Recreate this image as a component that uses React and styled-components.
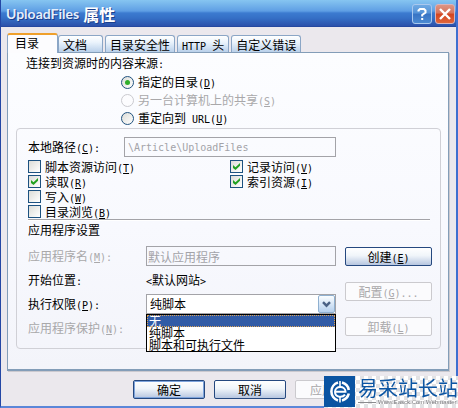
import React, { useState } from 'react';
import styled, { createGlobalStyle, css } from 'styled-components';

const GlobalStyle = createGlobalStyle`
  * {
    box-sizing: border-box;
  }
  body {
    margin: 0;
    background: #ebe8ed;
    color: #000;
    font-family: 'Noto Sans CJK SC', sans-serif;
    font-size: 12px;
    line-height: 14px;
  }
  button, input, select {
    margin: 0;
    font: inherit;
    color: inherit;
  }
`;

// Window frame
const Dialog = styled.main`
  background: #ebe8ed;
  border-left: 1px solid #2447a5;
  border-right: 2px solid #3f6fd0;
  border-bottom: 2px solid #5b86d8;
  overflow: hidden;
`;

const TitleBar = styled.header`
  display: flex;
  align-items: center;
  gap: 3px;
  height: 27px;
  padding: 0 1px 0 5px;
  background: linear-gradient(#86c5f1 0, #5f9fe4 11px, #3c7bd0 13px, #3570c6 18px, #2b51ab 26px, #1f3f94 27px);
`;

const Title = styled.h1`
  flex: 1;
  display: flex;
  align-items: center;
  gap: 4px;
  margin: 0;
  color: #fff;
  font-size: 16px;
  font-weight: 700;
  line-height: 20px;
  text-shadow: 1px 1px 0 #1c3f8c;
`;

const TitleName = styled.span`
  color: #e4eefc;
  font-family: Lato, sans-serif;
  font-size: 14px;
  font-weight: 700;
`;

const CaptionButton = styled.button`
  display: flex;
  align-items: center;
  justify-content: center;
  width: 20px;
  height: 20px;
  padding: 0;
  color: #fff;
  border: 1px solid ${(p) => (p.$close ? '#d9b3bb' : '#a9c8ee')};
  border-radius: 3px;
  background: ${(p) =>
    p.$close
      ? 'linear-gradient(#dc9585, #d8745c 45%, #d34420 50%, #e0663a)'
      : 'linear-gradient(#6fa9e2, #5593d8 45%, #3873c4 50%, #4b8ad2)'};
`;

// Tabs
const Tabs = styled.div`
  display: flex;
  align-items: flex-end;
  gap: 2px;
  height: 19px;
  margin: 6px 7px 0 6px;
`;

const Tab = styled.button`
  height: 17px;
  padding: 1px 4px 0;
  white-space: nowrap;
  line-height: 14px;
  text-align: left;
  border: 1px solid #8ba6c6;
  border-bottom: 0;
  border-radius: 3px 3px 0 0;
  background: linear-gradient(#fff, #eaf3fc 40%, #b9d0ea);
  ${(p) =>
    p.$active &&
    css`
      position: relative;
      z-index: 1;
      height: 20px;
      width: 51px;
      margin-right: -2px;
      margin-bottom: -1px;
      padding: 0 0 3px 7px;
      border-top: 2px solid #efa02c;
      background: #fcfcfe;
    `}
  ${(p) =>
    p.$wide &&
    css`
      padding-right: 15px;
    `}
`;

const Panel = styled.section`
  margin: 0 7px 0 6px;
  padding: 2px 7px 20px 8px;
  border: 1px solid #839db8;
  border-bottom-width: 2px;
  box-shadow: 1px 1px 0 #cbc9cf;
  background: linear-gradient(#fcfdff, #f8f9fe 55%, #f3f4fa);
`;

const Source = styled.fieldset`
  margin: 0;
  padding: 0 0 0 10px;
  border: 0;
  min-width: 0;
`;

const SourceLegend = styled.legend`
  padding: 0;
  line-height: 16px;
`;

const RadioList = styled.div`
  display: flex;
  flex-direction: column;
  padding: 2px 0 1px 95px;
`;

const Choice = styled.label`
  display: flex;
  align-items: center;
  gap: 4px;
  height: ${(p) => p.$height}px;
  color: ${(p) => (p.$disabled ? '#a9a8aa' : '#000')};
  white-space: nowrap;
`;

const Radio = styled.input.attrs({ type: 'radio' })`
  appearance: none;
  display: grid;
  place-items: center;
  width: 13px;
  height: 13px;
  border: 1px solid #20527f;
  border-radius: 50%;
  background: linear-gradient(135deg, #dcdcd7, #fff);
  &:checked::before {
    content: '';
    width: 5px;
    height: 5px;
    border-radius: 50%;
    background: #2fae2b;
  }
  &:disabled {
    border-color: #cacacf;
    background: #fcfcfe;
  }
`;

const Check = styled.input.attrs({ type: 'checkbox' })`
  appearance: none;
  display: grid;
  place-items: center;
  width: 13px;
  height: 13px;
  border: 1px solid #1c5180;
  background: linear-gradient(135deg, #dcdcd7, #fff);
  &:checked::before {
    content: '';
    width: 7px;
    height: 7px;
    background: #21a121;
    clip-path: polygon(0 29%, 36% 62%, 100% 0, 100% 40%, 36% 100%, 0 70%);
  }
`;

const Group = styled.div`
  padding: 8px 8px 8px 11px;
  border: 1px solid #d0d0d6;
  border-radius: 4px;
`;

const PathRow = styled.div`
  display: flex;
  align-items: center;
  margin-right: 96px;
`;

const TextLabel = styled.label`
  flex: none;
  width: ${(p) => p.$width}px;
  color: ${(p) => (p.$disabled ? '#a9a8aa' : '#000')};
`;

const TextBox = styled.input`
  flex: 1;
  min-width: 0;
  height: 20px;
  padding: 0 1px;
  border: 1px solid #a3a3a8;
  background: transparent;
  color: #a3a3a8;
  ${(p) =>
    p.$latin &&
    css`
      padding: 0 3px;
      font-family: 'DejaVu Sans Mono', monospace;
      font-size: 10px;
    `}
`;

const Checks = styled.div`
  display: grid;
  grid-template-columns: 1fr 1fr;
  grid-template-rows: repeat(4, 15px);
  grid-auto-flow: column;
  padding-top: 2px;
`;

const AppTitle = styled.h2`
  margin: 0 2px 0 0;
  padding-top: 2px;
  border-top: 1px solid #a3a3a8;
  box-shadow: inset 0 1px 0 #fff;
  font-size: 12px;
  font-weight: 400;
  line-height: 16px;
`;

const AppArea = styled.div`
  display: flex;
  gap: 9px;
  padding-top: 6px;
`;

const Fields = styled.div`
  flex: 1;
  min-width: 0;
`;

const Field = styled.div`
  display: flex;
  align-items: center;
  height: 24px;
`;

const Commands = styled.div`
  display: flex;
  flex-direction: column;
  gap: 16px;
  width: 87px;
  padding-top: 3px;
`;

const Button = styled.button`
  height: 19px;
  padding: 0;
  line-height: 16px;
  border: 1px solid #25487f;
  border-radius: 2px;
  background: linear-gradient(#fff, #f0f5fa 45%, #b7c6e0);
  box-shadow: ${(p) => (p.$default ? 'inset 0 0 0 1px #7ea4dc' : 'none')};
  &:disabled {
    border-color: #cbcace;
    background: #fbfbfd;
    color: #a9a8aa;
  }
`;

const Combo = styled.div`
  position: relative;
  flex: 1;
  min-width: 0;
`;

const Select = styled.select`
  appearance: none;
  display: block;
  width: 100%;
  height: 20px;
  padding: 0 20px 0 3px;
  border: 1px solid #a3a3a8;
  border-radius: 0;
  background: #fff;
`;

const Arrow = styled.span`
  position: absolute;
  top: 1px;
  right: 1px;
  display: grid;
  place-items: center;
  width: 17px;
  height: 18px;
  border: 1px solid #8fb0d0;
  border-radius: 2px;
  background: linear-gradient(#fafdff, #b5d0ee);
  pointer-events: none;
`;

const Options = styled.ul`
  position: absolute;
  z-index: 2;
  top: 20px;
  left: 0;
  right: 0;
  margin: 0;
  padding: 0;
  list-style: none;
  background: #fff;
  border: 1px solid #000;
`;

const Option = styled.li`
  height: 12px;
  padding-left: 2px;
  line-height: 12px;
  ${(p) =>
    p.$selected &&
    css`
      background: #315ba6;
      color: #fff;
      outline: 1px dotted #d9a257;
      outline-offset: -1px;
    `}
`;

const Footer = styled.footer`
  display: flex;
  justify-content: flex-end;
  gap: 9px;
  padding: 9px 89px 7px 0;

  ${Button} {
    width: 72px;
  }
`;

// Half-width characters
const Latin = styled.span`
  font-family: 'DejaVu Sans Mono', monospace;
  font-size: 10px;
  line-height: 0;
`;

// Site badge lying over the corner of the dialog
const Badge = styled.div`
  position: fixed;
  right: 0;
  bottom: 0;
  display: flex;
  gap: 3px;
  height: 32px;
  background: repeating-conic-gradient(#e2e2e4 0 25%, #fff 0 50%) 0 0 / 8px 8px;
`;

const BadgeText = styled.div`
  padding-top: 2px;
  color: #0b55a3;
  font-size: 20px;
  font-weight: 400;
  line-height: 20px;
  white-space: nowrap;
`;

const BadgeCaption = styled.div`
  display: flex;
  align-items: center;
  gap: 2px;
  color: #77777a;
  font-family: 'Liberation Sans', sans-serif;
  font-size: 6px;
  line-height: 8px;
  white-space: nowrap;
  &::before {
    content: '';
    width: 18px;
    border-top: 1px solid #8b8b8e;
  }
`;

const Key = ({ k, tail = '' }) => (
  <Latin>
    (<u>{k}</u>){tail}
  </Latin>
);

const tabs = [
  { id: 'dir', label: '目录' },
  { id: 'doc', label: '文档', wide: true },
  { id: 'security', label: '目录安全性' },
  { id: 'http', label: <><Latin>HTTP </Latin>头</> },
  { id: 'errors', label: '自定义错误' },
];

const sources = [
  { id: 'dir', label: '指定的目录', k: 'D' },
  { id: 'share', label: '另一台计算机上的共享', k: 'S', disabled: true },
  { id: 'url', label: <>重定向到<Latin> URL</Latin></>, k: 'U' },
];

const permissions = [
  { id: 'script', label: '脚本资源访问', k: 'T' },
  { id: 'read', label: '读取', k: 'R' },
  { id: 'write', label: '写入', k: 'W' },
  { id: 'browse', label: '目录浏览', k: 'B' },
  { id: 'log', label: '记录访问', k: 'V' },
  { id: 'index', label: '索引资源', k: 'I' },
];

const execOptions = ['无', '纯脚本', '脚本和可执行文件'];

const App = () => {
  const [tab, setTab] = useState('dir');
  const [source, setSource] = useState('dir');
  const [checked, setChecked] = useState({ read: true, log: true, index: true });
  const [exec, setExec] = useState('纯脚本');
  const [hovered, setHovered] = useState('无');

  const toggle = (id) => setChecked((prev) => ({ ...prev, [id]: !prev[id] }));

  return (
    <>
      <GlobalStyle />
      <Dialog>
        <TitleBar>
          <Title>
            <TitleName>UploadFiles</TitleName>属性
          </Title>
          <CaptionButton aria-label="帮助">
            <svg width="12" height="14" viewBox="0 0 12 14" fill="none" stroke="currentColor" strokeWidth="2">
              <path d="M2.5 4.5V3.5L4 2h4l1.5 1.5v2L6.2 8v1.6M6.2 11v2" />
            </svg>
          </CaptionButton>
          <CaptionButton $close aria-label="关闭">
            <svg width="12" height="12" viewBox="0 0 12 12" stroke="currentColor" strokeWidth="2.4">
              <path d="M1 1l10 10M11 1L1 11" />
            </svg>
          </CaptionButton>
        </TitleBar>

        <Tabs role="tablist">
          {tabs.map((t) => (
            <Tab
              key={t.id}
              role="tab"
              aria-selected={tab === t.id}
              $active={tab === t.id}
              $wide={t.wide}
              onClick={() => setTab(t.id)}
            >
              {t.label}
            </Tab>
          ))}
        </Tabs>

        <Panel role="tabpanel">
          <Source>
            <SourceLegend>
              连接到资源时的内容来源<Latin>:</Latin>
            </SourceLegend>
            <RadioList>
              {sources.map((s) => (
                <Choice key={s.id} $height={18} $disabled={s.disabled}>
                  <Radio
                    name="source"
                    checked={source === s.id}
                    disabled={s.disabled}
                    onChange={() => setSource(s.id)}
                  />
                  <span>{s.label}<Key k={s.k} /></span>
                </Choice>
              ))}
            </RadioList>
          </Source>

          <Group>
            <PathRow>
              <TextLabel htmlFor="path" $width={96}>本地路径<Key k="C" tail=":" /></TextLabel>
              <TextBox id="path" $latin disabled defaultValue="\Article\UploadFiles" />
            </PathRow>

            <Checks>
              {permissions.map((p) => (
                <Choice key={p.id} $height={15}>
                  <Check checked={!!checked[p.id]} onChange={() => toggle(p.id)} />
                  <span>{p.label}<Key k={p.k} /></span>
                </Choice>
              ))}
            </Checks>

            <AppTitle>应用程序设置</AppTitle>
            <AppArea>
              <Fields>
                <Field>
                  <TextLabel htmlFor="app" $width={118} $disabled>应用程序名<Key k="M" tail=":" /></TextLabel>
                  <TextBox id="app" disabled defaultValue="默认应用程序" />
                </Field>
                <Field>
                  <TextLabel as="span" $width={118}>开始位置<Latin>:</Latin></TextLabel>
                  <span><Latin>&lt;</Latin>默认网站<Latin>&gt;</Latin></span>
                </Field>
                <Field>
                  <TextLabel htmlFor="exec" $width={118}>执行权限<Key k="P" tail=":" /></TextLabel>
                  <Combo>
                    <Select id="exec" value={exec} onChange={(e) => setExec(e.target.value)}>
                      {execOptions.map((o) => <option key={o}>{o}</option>)}
                    </Select>
                    <Arrow>
                      <svg width="9" height="7" viewBox="0 0 9 7" fill="none" stroke="#4a6184" strokeWidth="2.4">
                        <path d="M1 1.2L4.5 4.7 8 1.2" />
                      </svg>
                    </Arrow>
                    <Options role="listbox" aria-label="执行权限">
                      {execOptions.map((o) => (
                        <Option
                          key={o}
                          role="option"
                          aria-selected={hovered === o}
                          $selected={hovered === o}
                          onMouseEnter={() => setHovered(o)}
                          onClick={() => setExec(o)}
                        >
                          {o}
                        </Option>
                      ))}
                    </Options>
                  </Combo>
                </Field>
                <Field>
                  <TextLabel as="span" $width={118} $disabled>应用程序保护<Key k="N" tail=":" /></TextLabel>
                </Field>
              </Fields>
              <Commands>
                <Button>创建<Key k="E" /></Button>
                <Button disabled>配置<Key k="G" tail="..." /></Button>
                <Button disabled>卸载<Key k="L" /></Button>
              </Commands>
            </AppArea>
          </Group>
        </Panel>

        <Footer>
          <Button $default>确定</Button>
          <Button>取消</Button>
          <Button disabled>应用<Key k="A" /></Button>
        </Footer>
      </Dialog>

      <Badge>
        <svg width="31" height="31" viewBox="0 0 31 31">
          <rect width="31" height="31" fill="#0a54a2" />
          <g fill="none" stroke="#fff">
            <path d="M14 6.6A9.3 9.3 0 0 0 14 24.4M18 6.6A9.3 9.3 0 0 1 24.8 14M24.8 17.5A9.3 9.3 0 0 1 18 24.4" strokeWidth="2.6" />
            <path d="M10.5 15.8H21.5C21.5 9.5 11 9.5 11 15.8S19 21.5 21 18.6" strokeWidth="2" />
            <path d="M16 5v6M16 20.5v6" strokeWidth="1.6" />
          </g>
        </svg>
        <div>
          <BadgeText>易采站长站</BadgeText>
          <BadgeCaption>Www.Easck.Com Webmaster</BadgeCaption>
        </div>
      </Badge>
    </>
  );
};

export default App;
